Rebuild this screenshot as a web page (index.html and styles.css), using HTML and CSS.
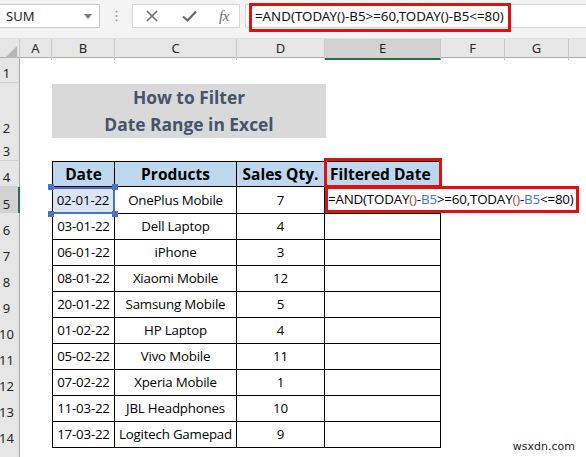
FILE: index.html
```html
<!DOCTYPE html>
<html>
<head>
<meta charset="utf-8">
<link rel="stylesheet" href="styles.css">
</head>
<body>
<div class="app">
  <div class="fbar">
    <div class="namebox">
      <span class="nb-text">SUM</span>
      <svg class="nb-arrow" width="8" height="5" viewBox="0 0 8 5"><path d="M0 0 L8 0 L4 5 Z" fill="#7a7a7a"/></svg>
    </div>
    <svg class="grip" width="3" height="12" viewBox="0 0 3 12"><circle cx="1.5" cy="1.5" r="1" fill="#9a9a9a"/><circle cx="1.5" cy="6" r="1" fill="#9a9a9a"/><circle cx="1.5" cy="10.5" r="1" fill="#9a9a9a"/></svg>
    <div class="btns">
      <svg class="ic-x" width="12" height="12" viewBox="0 0 12 12"><path d="M1 1 L11 11 M11 1 L1 11" stroke="#6b6b6b" stroke-width="1.6"/></svg>
      <svg class="ic-check" width="15" height="12" viewBox="0 0 15 12"><path d="M1 6.5 L5.5 10.5 L14 1.5" fill="none" stroke="#6b6b6b" stroke-width="2.2"/></svg>
      <span class="ic-fx">fx</span>
    </div>
    <div class="formula">
      <span class="ftext">=AND(TODAY()-B5&gt;=60,TODAY()-B5&lt;=80)</span>
      <div class="redbox fb-red"></div>
    </div>
  </div>

  <div class="sheet">
    <div class="row colhdr">
      <div class="corner"><svg width="12" height="12" viewBox="0 0 12 12"><path d="M12 0 L12 12 L0 12 Z" fill="#b7b7b7"/></svg></div>
      <div class="ch">A</div><div class="ch">B</div><div class="ch">C</div><div class="ch">D</div>
      <div class="ch sel">E</div><div class="ch">F</div><div class="ch">G</div><div class="ch last"></div>
    </div>

    <div class="row r1"><div class="rh">1</div></div>

    <div class="row r2">
      <div class="rh">2</div><div></div>
      <div class="title">How to Filter<br>Date Range in Excel</div>
    </div>

    <div class="row r3"><div class="rh">3</div></div>

    <div class="row r4">
      <div class="rh">4</div><div></div>
      <div class="tc th first">Date</div>
      <div class="tc th">Products</div>
      <div class="tc th">Sales Qty.</div>
      <div class="tc th e4">Filtered Date<div class="redbox e4-red"></div></div>
    </div>

    <div class="row">
      <div class="rh sel">5</div><div></div>
      <div class="tc first b5">02-01-22<span class="hd tl"></span><span class="hd tr"></span><span class="hd bl"></span><span class="hd br"></span></div>
      <div class="tc">OnePlus Mobile</div>
      <div class="tc">7</div>
      <div class="tc e5"><div class="editor">=AND(TODAY<span class="pr">()</span>-<span class="ref">B5</span>&gt;=60,TODAY<span class="pr">()</span>-<span class="ref">B5</span>&lt;=80)</div></div>
    </div>

    <div class="row"><div class="rh">6</div><div></div><div class="tc first">03-01-22</div><div class="tc">Dell Laptop</div><div class="tc">4</div><div class="tc"></div></div>
    <div class="row"><div class="rh">7</div><div></div><div class="tc first">06-01-22</div><div class="tc">iPhone</div><div class="tc">3</div><div class="tc"></div></div>
    <div class="row"><div class="rh">8</div><div></div><div class="tc first">08-01-22</div><div class="tc">Xiaomi Mobile</div><div class="tc">12</div><div class="tc"></div></div>
    <div class="row"><div class="rh">9</div><div></div><div class="tc first">20-01-22</div><div class="tc">Samsung Mobile</div><div class="tc">5</div><div class="tc"></div></div>
    <div class="row"><div class="rh">10</div><div></div><div class="tc first">01-02-22</div><div class="tc">HP Laptop</div><div class="tc">4</div><div class="tc"></div></div>
    <div class="row"><div class="rh">11</div><div></div><div class="tc first">05-02-22</div><div class="tc">Vivo Mobile</div><div class="tc">11</div><div class="tc"></div></div>
    <div class="row"><div class="rh">12</div><div></div><div class="tc first">07-02-22</div><div class="tc">Xperia Mobile</div><div class="tc">1</div><div class="tc"></div></div>
    <div class="row"><div class="rh">13</div><div></div><div class="tc first">11-03-22</div><div class="tc">JBL Headphones</div><div class="tc">10</div><div class="tc"></div></div>
    <div class="row"><div class="rh">14</div><div></div><div class="tc first">17-03-22</div><div class="tc">Logitech Gamepad</div><div class="tc">9</div><div class="tc"></div></div>
    <div class="row"><div class="rh"></div></div>
  </div>
  <div class="watermark">wsxdn.com</div>
</div>
</body>
</html>
```

FILE: styles.css
```css
* { box-sizing: border-box; }
html, body { margin: 0; padding: 0; background: #fff; }
.app {
  position: relative;
  width: 586px;
  height: 457px;
  overflow: hidden;
  font-family: "Open Sans", "Noto Sans", sans-serif;
}

/* formula bar */
.fbar {
  height: 39px;
  background: #f3f3f3;
  display: flex;
  align-items: flex-start;
  padding-top: 4px;
  border-bottom: 1px solid #e0e0e0;
}
.namebox {
  width: 100px;
  height: 24px;
  background: #fff;
  border: 1px solid #c9c9c9;
  border-left: none;
  display: flex;
  align-items: center;
  justify-content: space-between;
  padding: 0 7px 0 6px;
}
.nb-text { font-family: "Noto Sans", sans-serif; font-size: 13px; color: #262626; }
.grip { margin: 6px 0 0 15px; }
.btns {
  margin-left: 14px;
  width: 108px;
  height: 24px;
  background: #fff;
  border: 1px solid #d6d6d6;
  display: flex;
  align-items: center;
  padding-left: 13px;
}
.ic-check { margin-left: 24px; }
.ic-fx {
  margin-left: 22px;
  font-family: "Liberation Serif", serif;
  font-style: italic;
  font-size: 15px;
  color: #6b6b6b;
  letter-spacing: -0.5px;
}
.formula {
  position: relative;
  flex: 1;
  margin-left: 5px;
  height: 24px;
  background: #fff;
  border: 1px solid #d6d6d6;
  border-right: none;
  display: flex;
  align-items: center;
  padding-left: 9px;
}
.ftext { font-family: "Noto Sans", sans-serif; font-size: 13.3px; color: #111; white-space: nowrap; }
.redbox { position: absolute; border: 3px solid #e01010; pointer-events: none; }
.fb-red { left: 3px; top: -2px; width: 262px; height: 29px; }

/* sheet */
.sheet { display: flex; flex-direction: column; }
.row {
  display: grid;
  grid-template-columns: 20px 32px 63px 122px 88px 116px 64px 64px 1fr;
  height: 26px;
}
.colhdr { height: 19px; background: #e6e6e6; border-bottom: 1px solid #ababab; }
.r1 { height: 25px; }
.r2 { height: 54px; }
.r3 { height: 24px; }
.corner {
  border-right: 1px solid #c8c8c8;
  display: flex;
  align-items: flex-end;
  justify-content: flex-end;
  padding: 0 2px 2px 0;
}
.ch {
  border-right: 1px solid #c8c8c8;
  font-family: "Noto Sans", sans-serif;
  font-size: 13px;
  color: #262626;
  text-align: center;
  line-height: 19px;
}
.ch.sel { background: #d2d2d2; border-bottom: 2px solid #217346; color: #1e1e1e; }
.ch.last { border-right: none; }

.rh {
  background: #e6e6e6;
  border-right: 1px solid #ababab;
  border-bottom: 1px solid #d0d0d0;
  font-family: "Noto Sans", sans-serif;
  font-size: 13px;
  line-height: 16px;
  color: #262626;
  display: flex;
  align-items: flex-end;
  justify-content: center;
  padding: 0 6px 1px 0;
}
.rh.sel { background: #d2d2d2; border-right: 2px solid #217346; padding-right: 5px; }

.title {
  grid-column: 3 / 6;
  margin-top: 1px;
  margin-right: -1px;
  background: #d9d9d9;
  color: #44546a;
  font-weight: bold;
  font-size: 17.4px;
  line-height: 27px;
  text-align: center;
}

.tc {
  border-right: 1px solid #000;
  border-bottom: 1px solid #000;
  font-size: 13.3px;
  letter-spacing: -0.2px;
  color: #000;
  text-align: center;
  line-height: 26px;
  white-space: nowrap;
}
.tc.first { border-left: 1px solid #000; }
.th {
  border-top: 1px solid #000;
  background: #bdd7ee;
  font-weight: bold;
  font-size: 15.5px;
  letter-spacing: 0;
  line-height: 24px;
}
.e4 { position: relative; text-align: left; padding-left: 5px; }
.e4-red { left: -1px; top: -4px; width: 118px; height: 30px; }

.b5 {
  position: relative;
  background: #dbe4f3;
  border: 2px solid #4a72c2;
  line-height: 23px;
}
.hd { position: absolute; width: 6px; height: 6px; background: #4a72c2; }
.hd.tl { left: -5px; top: -5px; }
.hd.tr { right: -5px; top: -5px; }
.hd.bl { left: -5px; bottom: -5px; }
.hd.br { right: -5px; bottom: -5px; }

.e5 { position: relative; }
.editor {
  position: absolute;
  left: 0;
  top: -1px;
  width: 254px;
  height: 27px;
  background: #fff;
  border: 3px solid #e01010;
  font-size: 13.4px;
  line-height: 21px;
  text-align: left;
  color: #000;
  white-space: nowrap;
  letter-spacing: -0.2px;
}
.pr { color: #b23a3a; }
.ref { color: #4472c4; }

.watermark {
  position: absolute;
  right: 11px;
  bottom: 4px;
  font-family: "DejaVu Sans", sans-serif;
  font-size: 11px;
  color: #222;
}
```
